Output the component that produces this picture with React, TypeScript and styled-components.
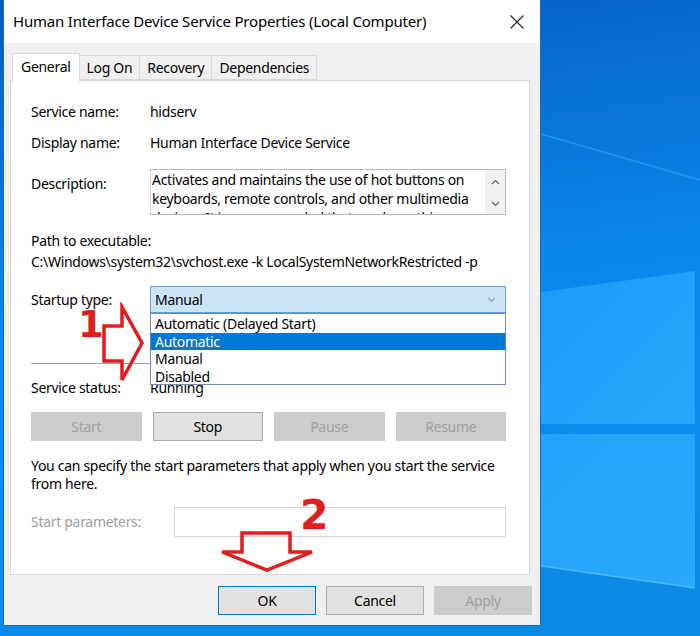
import React from "react";
import styled, { createGlobalStyle } from "styled-components";

const UI = `"Segoe UI", "Noto Sans", "Liberation Sans", sans-serif`;

const GlobalStyle = createGlobalStyle`
  html, body { margin: 0; padding: 0; }
  body {
    width: 700px;
    height: 636px;
    overflow: hidden;
    font-family: ${UI};
    -webkit-font-smoothing: antialiased;
  }
  * { box-sizing: border-box; }
`;

const Desktop = styled.div`
  position: relative;
  width: 700px;
  height: 636px;
  display: flex;
  align-items: flex-start;
  padding-left: 3px;
  overflow: hidden;
  background: linear-gradient(172deg, #0556c0 0%, #0870d6 22%, #0a86ea 45%, #0a8cf0 65%, #0b8ae2 100%);
`;

const Dialog = styled.div`
  width: 538px;
  height: 626px;
  display: flex;
  flex-direction: column;
  background: #f0f0f0;
  border: 1px solid #1c6fb8;
  border-top: none;
  color: #000;
  font-size: 14px;
  letter-spacing: -0.3px;
`;

const TitleBar = styled.div`
  height: 43px;
  flex: none;
  display: flex;
  align-items: center;
  background: #fff;
  padding-left: 9px;
`;

const TitleText = styled.div`
  flex: 1;
  font-size: 15px;
  letter-spacing: -0.2px;
  white-space: nowrap;
  padding-bottom: 1px;
`;

const CloseButton = styled.div`
  width: 46px;
  height: 43px;
  display: flex;
  align-items: center;
  justify-content: center;
`;

const Body = styled.div`
  flex: 1;
  display: flex;
  flex-direction: column;
  padding: 10px 0 0 6px;
`;

const TabRow = styled.div`
  height: 27px;
  display: flex;
  align-items: flex-end;
  padding-left: 2px;
  position: relative;
  z-index: 2;
`;

const Tab = styled.div<{ $active?: boolean }>`
  height: ${(p) => (p.$active ? 28 : 25)}px;
  margin-bottom: ${(p) => (p.$active ? -1 : 0)}px;
  margin-left: ${(p) => (p.$active ? 0 : -1)}px;
  padding: 0 ${(p) => (p.$active ? 8 : 7)}px;
  display: flex;
  align-items: center;
  background: ${(p) => (p.$active ? "#fff" : "#f0f0f0")};
  border: 1px solid #d9d9d9;
  border-bottom: ${(p) => (p.$active ? "none" : "1px solid #d9d9d9")};
  font-size: 14px;
  padding-bottom: ${(p) => (p.$active ? 3 : 1)}px;
  white-space: nowrap;
  &:first-child { margin-left: 0; }
`;

const Panel = styled.div`
  height: 495px;
  margin-right: 10px;
  background: #fff;
  border: 1px solid #d9d9d9;
  padding: 22px 23px 0 20px;
  display: flex;
  flex-direction: column;
`;

const Row = styled.div<{ $mt?: number; $label?: number; $align?: string }>`
  display: grid;
  grid-template-columns: ${(p) => p.$label ?? 119}px 1fr;
  align-items: ${(p) => p.$align ?? "center"};
  margin-top: ${(p) => p.$mt ?? 0}px;
  line-height: 18px;
  white-space: nowrap;
`;

const Label = styled.div<{ $disabled?: boolean; $pt?: number }>`
  color: ${(p) => (p.$disabled ? "#a0a0a0" : "#000")};
  padding-top: ${(p) => p.$pt ?? 0}px;
`;

const Value = styled.div``;

const Line = styled.div<{ $mt?: number }>`
  margin-top: ${(p) => p.$mt ?? 0}px;
  line-height: 18px;
  white-space: nowrap;
`;

const DescBox = styled.div`
  height: 46px;
  display: flex;
  border: 1px solid #b9b9b9;
  border-left-color: #d0d0d0;
  overflow: hidden;
`;

const DescText = styled.div`
  flex: 1;
  padding-left: 1px;
  line-height: 19px;
  white-space: nowrap;
  overflow: hidden;
`;

const ScrollBar = styled.div`
  width: 20px;
  background: #f0f0f0;
  display: flex;
  flex-direction: column;
  align-items: center;
  justify-content: space-between;
  padding: 9px 0 7px;
`;

const ComboWrap = styled.div`
  position: relative;
`;

const Combo = styled.div`
  height: 27px;
  display: flex;
  align-items: center;
  justify-content: space-between;
  padding: 0 9px 0 4px;
  background: #cce4f7;
  border: 1px solid #5a9ee2;
`;

const DropList = styled.div`
  position: absolute;
  left: 0;
  right: 0;
  top: 100%;
  height: 72px;
  background: #fff;
  border: 1px solid #6f8bab;
  padding-top: 1px;
  z-index: 5;
`;

const DropItem = styled.div<{ $selected?: boolean }>`
  height: 17.5px;
  line-height: 17.5px;
  padding-left: 4px;
  background: ${(p) => (p.$selected ? "#0078d7" : "transparent")};
  color: ${(p) => (p.$selected ? "#fff" : "#000")};
`;

const Separator = styled.div<{ $mt: number }>`
  margin-top: ${(p) => p.$mt}px;
  height: 1px;
  background: #a0a0a0;
`;

const ButtonRow = styled.div<{ $mt: number }>`
  margin-top: ${(p) => p.$mt}px;
  display: grid;
  grid-template-columns: repeat(4, 1fr);
  column-gap: 11px;
`;

const Btn = styled.div<{ $disabled?: boolean; $default?: boolean; $w?: number }>`
  height: 29px;
  ${(p) => (p.$w ? `width: ${p.$w}px;` : "")}
  display: flex;
  align-items: center;
  justify-content: center;
  background: ${(p) => (p.$disabled ? "#cccccc" : "#e1e1e1")};
  border: 1px solid ${(p) => (p.$default ? "#0078d7" : p.$disabled ? "#cccccc" : "#adadad")};
  color: ${(p) => (p.$disabled ? "#a0a0a0" : "#000")};
  font-size: 14px;
`;

const Para = styled.div<{ $mt: number }>`
  margin-top: ${(p) => p.$mt}px;
  line-height: 18px;
  white-space: nowrap;
`;

const ParamInput = styled.div`
  height: 30px;
  border: 1px solid #d4d4d4;
  background: #fff;
`;

const Footer = styled.div`
  flex: 1;
  display: flex;
  justify-content: flex-end;
  align-items: flex-start;
  gap: 10px;
  padding: 11px 8px 0 0;
`;

const WallArt = styled.div`
  flex: 1;
  height: 636px;
  svg { display: block; }
`;

const Marker = styled.div<{ $x: number; $y: number }>`
  position: absolute;
  left: ${(p) => p.$x}px;
  top: ${(p) => p.$y}px;
  z-index: 10;
  svg { display: block; }
`;

const Digit = styled.div<{ $size: number }>`
  font-family: "DejaVu Sans", sans-serif;
  font-weight: bold;
  font-size: ${(p) => p.$size}px;
  line-height: 0.85;
  color: #e21d1f;
`;

const Chevron = ({ up, color = "#606060" }: { up?: boolean; color?: string }) => (
  <svg width="9" height="6" viewBox="0 0 9 6">
    <polyline
      points={up ? "1,5 4.5,1.5 8,5" : "1,1 4.5,4.5 8,1"}
      fill="none"
      stroke={color}
      strokeWidth="1.2"
    />
  </svg>
);

export default function App() {
  return (
    <>
      <GlobalStyle />
      <Desktop>
        <Dialog>
          <TitleBar>
            <TitleText>Human Interface Device Service Properties (Local Computer)</TitleText>
            <CloseButton>
              <svg width="14" height="14" viewBox="0 0 14 14">
                <path d="M0.5 0.5 L13.5 13.5 M13.5 0.5 L0.5 13.5" stroke="#222" strokeWidth="1.1" />
              </svg>
            </CloseButton>
          </TitleBar>
          <Body>
            <TabRow>
              <Tab $active>General</Tab>
              <Tab>Log On</Tab>
              <Tab>Recovery</Tab>
              <Tab>Dependencies</Tab>
            </TabRow>
            <Panel>
              <Row>
                <Label>Service name:</Label>
                <Value>hidserv</Value>
              </Row>
              <Row $mt={13}>
                <Label>Display name:</Label>
                <Value>Human Interface Device Service</Value>
              </Row>
              <Row $mt={17} $align="start">
                <Label $pt={6}>Description:</Label>
                <DescBox>
                  <DescText>
                    Activates and maintains the use of hot buttons on
                    <br />
                    keyboards, remote controls, and other multimedia
                    <br />
                    devices. It is recommended that you keep this
                  </DescText>
                  <ScrollBar>
                    <Chevron up />
                    <Chevron />
                  </ScrollBar>
                </DescBox>
              </Row>
              <Line $mt={17}>Path to executable:</Line>
              <Line $mt={3}>C:\Windows\system32\svchost.exe -k LocalSystemNetworkRestricted -p</Line>
              <Row $mt={15}>
                <Label>Startup type:</Label>
                <ComboWrap>
                  <Combo>
                    <span>Manual</span>
                    <Chevron color="#9a9a9a" />
                  </Combo>
                  <DropList>
                    <DropItem>Automatic (Delayed Start)</DropItem>
                    <DropItem $selected>Automatic</DropItem>
                    <DropItem>Manual</DropItem>
                    <DropItem>Disabled</DropItem>
                  </DropList>
                </ComboWrap>
              </Row>
              <Separator $mt={50} />
              <Row $mt={15}>
                <Label>Service status:</Label>
                <Value>Running</Value>
              </Row>
              <ButtonRow $mt={15}>
                <Btn $disabled>Start</Btn>
                <Btn>Stop</Btn>
                <Btn $disabled>Pause</Btn>
                <Btn $disabled>Resume</Btn>
              </ButtonRow>
              <Para $mt={16}>
                You can specify the start parameters that apply when you start the service
                <br />
                from here.
              </Para>
              <Row $mt={14} $label={143}>
                <Label $disabled>Start parameters:</Label>
                <ParamInput />
              </Row>
            </Panel>
            <Footer>
              <Btn $default $w={98}>OK</Btn>
              <Btn $w={98}>Cancel</Btn>
              <Btn $disabled $w={98}>Apply</Btn>
            </Footer>
          </Body>
        </Dialog>
        <WallArt>
          <svg width="159" height="636" viewBox="0 0 159 636">
            <defs>
              <linearGradient id="pane1" x1="0" y1="0" x2="1" y2="1">
                <stop offset="0" stopColor="#1c9cf6" />
                <stop offset="1" stopColor="#26a6fb" />
              </linearGradient>
              <linearGradient id="pane2" x1="0" y1="0" x2="1" y2="1">
                <stop offset="0" stopColor="#22a2fa" />
                <stop offset="1" stopColor="#2aaafc" />
              </linearGradient>
            </defs>
            <line x1="0" y1="134" x2="159" y2="180" stroke="#3a9ef0" strokeWidth="1.5" opacity="0.7" />
            <polygon points="0,292 154,271 154,424 0,424" fill="url(#pane1)" />
            <polygon points="0,434 154,434 154,588 0,566" fill="url(#pane2)" />
            <line x1="0" y1="566" x2="154" y2="588" stroke="#5cc4ff" strokeWidth="1.5" opacity="0.7" />
          </svg>
        </WallArt>
        <Marker $x={78} $y={309}>
          <Digit $size={37}>1</Digit>
        </Marker>
        <Marker $x={98} $y={302}>
          <svg width="50" height="84" viewBox="0 0 50 84">
            <polygon
              points="6,24 24,24 24,5 44,41 24,78 24,59 6,59"
              fill="none"
              stroke="#e21d1f"
              strokeWidth="3.5"
            />
          </svg>
        </Marker>
        <Marker $x={300} $y={498}>
          <Digit $size={41}>2</Digit>
        </Marker>
        <Marker $x={215} $y={527}>
          <svg width="104" height="50" viewBox="0 0 104 50">
            <polygon
              points="27,6 75,6 75,25 97,25 52,43 7,25 27,25"
              fill="none"
              stroke="#e21d1f"
              strokeWidth="3.5"
            />
          </svg>
        </Marker>
      </Desktop>
    </>
  );
}
